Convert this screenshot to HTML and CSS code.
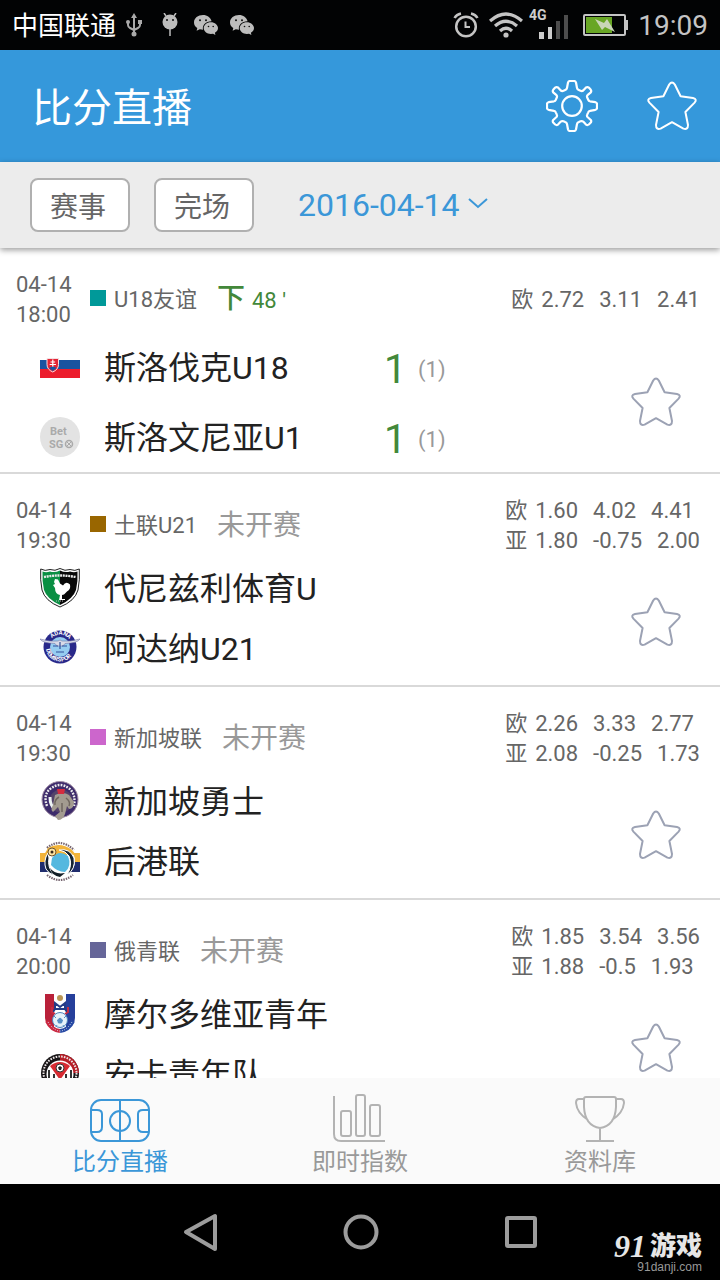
FILE: index.html
```html
<!DOCTYPE html>
<html lang="zh-CN">
<head>
<meta charset="utf-8">
<meta name="viewport" content="width=device-width, initial-scale=1">
<title>比分直播</title>
<link rel="stylesheet" href="styles.css">
</head>
<body>
<svg class="defs" aria-hidden="true">
  <symbol id="star" viewBox="0 0 52 52">
    <path d="M23.2 4.5Q26 0.5 28.8 4.5L34.6 16.2L47 18Q51.600 19.200 48.600 22.600L39.400 32L42 45Q42 50 37.400 48.600L26 42.200L14.600 48.600Q10 50 10 45L12.600 32L3.400 22.600Q0.400 19.200 5 18L17.400 16.200Z" fill="none" stroke="currentColor" stroke-width="2" stroke-linejoin="round"/>
  </symbol>
  <symbol id="wechat" viewBox="0 0 24 20">
    <path fill="#bdbdbd" d="M9 0C4 0 0 3.200 0 7.400C0 9.800 1.300 11.800 3.300 13L2.600 15.800L5.800 14.200L9 14.700C8 10 12 6.200 17.600 6.300C16.800 2.600 13.200 0 9 0Z"/>
    <path fill="#bdbdbd" d="M16.800 7.200C12.800 7.200 9.700 9.900 9.700 13.100C9.700 16.500 12.900 19 16.800 19L19 18.700L21.400 20L20.900 17.800C22.800 16.700 24 15 24 13.100C24 9.900 20.800 7.200 16.800 7.200Z"/>
    <g fill="#111"><circle cx="6" cy="5.200" r="1"/><circle cx="12" cy="5.200" r="1"/><circle cx="14.500" cy="11.500" r="0.800"/><circle cx="19.200" cy="11.500" r="0.800"/></g>
  </symbol>
</svg>

<div class="statusbar">
  <div class="status-left">
    <span class="carrier">中国联通</span>
    <svg width="16" height="24" viewBox="0 0 16 24" fill="none" stroke="#aaa" stroke-width="2"><path d="M8 3V21M2 9V12Q2 14 4 15L8 17M14 9V12Q14 14 12 15L8 17"/><path d="M5 5L8 0L11 5Z" fill="#aaa" stroke="none"/><circle cx="8" cy="21" r="2.500" fill="#aaa" stroke="none"/><circle cx="2" cy="9" r="2" fill="#aaa" stroke="none"/><path d="M12 7h4v4h-4z" fill="#aaa" stroke="none"/></svg>
    <svg class="droid" width="16" height="24" viewBox="0 0 16 24"><circle cx="8" cy="9" r="7.500" fill="#bdbdbd"/><path d="M4 3L2 0M12 3L14 0M8 16V23" stroke="#bdbdbd" stroke-width="1.500"/><circle cx="5" cy="7" r="1" fill="#111"/><circle cx="11" cy="7" r="1" fill="#111"/></svg>
    <svg width="24" height="20"><use href="#wechat"/></svg>
    <svg width="24" height="20"><use href="#wechat"/></svg>
  </div>
  <div class="status-right">
    <svg width="26" height="26" viewBox="0 0 26 26" fill="none" stroke="#c4c4c4" stroke-width="2.500"><circle cx="13" cy="14.500" r="9.800"/><path d="M1.500 6Q3.500 2.500 8 1.500M24.500 6Q22.500 2.500 18 1.500"/><path d="M12.500 9.500V15H17" stroke-width="2"/></svg>
    <svg width="34" height="26" viewBox="0 0 34 26" fill="none" stroke="#c4c4c4" stroke-width="3.200"><path d="M1 9Q17-5 33 9M6 14Q17 4.500 28 14M11 19Q17 13.500 23 19"/><circle cx="17" cy="23" r="2.600" fill="#c4c4c4" stroke="none"/></svg>
    <svg class="signal" width="40" height="34" viewBox="0 0 40 34"><text x="0" y="12" class="signal-label">4G</text><path d="M10 24h5v7h-5zM19 19h4v12h-4z" fill="#ccc"/><path d="M27 13h4v18h-4zM35 7h4v24h-4z" fill="#4d4d4d"/></svg>
    <svg width="45" height="22" viewBox="0 0 45 22"><rect x="1" y="1" width="41" height="20" rx="1" fill="none" stroke="#c4c4c4" stroke-width="2"/><path d="M42 6h3v10h-3z" fill="#c4c4c4"/><path d="M3 3h26v16H3z" fill="#68a625"/><path d="M12 5L21 9L24 5L32 18L22 13L19 16Z" fill="#c9d6b8"/></svg>
    <time class="clock">19:09</time>
  </div>
</div>

<header class="appbar">
  <h1>比分直播</h1>
  <div class="appbar-actions">
    <button type="button" aria-label="设置">
      <svg width="52" height="52" viewBox="0 0 52 52" fill="none" stroke="currentColor" stroke-width="2.200" stroke-linejoin="round"><circle cx="26" cy="26" r="9.800"/><path d="M22 2.500Q22.500 1 24 1H28Q29.500 1 30 2.500L31 8Q31.300 9.500 32.800 10.100L34.500 10.800Q36 11.400 37.200 10.500L40 7.500Q41.500 6.500 42.800 7.600L44.800 9.800Q45.700 11 44.800 12.400L41.500 15.200Q40.600 16.200 41.200 17.500L42.200 19.800Q42.700 21 44 21.300L49.400 22.200Q51 22.600 51 24V28Q51 29.400 49.400 29.800L44 30.800Q42.700 31 42.200 32.300L41.200 34.700Q40.600 36 41.500 37L44.800 40Q45.700 41.300 44.800 42.500L42.800 44.500Q41.500 45.500 40 44.600L37.200 41.600Q36 40.700 34.500 41.300L32.800 42Q31.300 42.500 31 44L30 49.500Q29.500 51 28 51H24Q22.500 51 22 49.500L21 44Q20.700 42.500 19.200 42L17.500 41.300Q16 40.700 14.800 41.600L12 44.600Q10.500 45.500 9.200 44.500L7.200 42.500Q6.300 41.300 7.200 40L10.500 37Q11.400 36 10.800 34.700L9.800 32.300Q9.300 31 8 30.800L2.600 29.800Q1 29.400 1 28V24Q1 22.600 2.600 22.200L8 21.300Q9.300 21 9.800 19.800L10.800 17.500Q11.400 16.200 10.500 15.200L7.200 12.400Q6.300 11 7.200 9.800L9.200 7.600Q10.500 6.500 12 7.500L14.800 10.500Q16 11.400 17.500 10.800L19.200 10.100Q20.700 9.500 21 8Z"/></svg>
    </button>
    <button type="button" aria-label="收藏"><svg width="52" height="52"><use href="#star"/></svg></button>
  </div>
</header>

<div class="filters">
  <button type="button" class="filter">赛事</button>
  <button type="button" class="filter">完场</button>
  <button type="button" class="date">2016-04-14<svg width="20" height="16" viewBox="0 0 20 16" fill="none" stroke="currentColor" stroke-width="2"><path d="M1 2L10 10L19 2"/></svg></button>
</div>

<main class="matches">
  <article class="match match-live">
    <div class="match-head">
      <time class="kickoff">04-14<br>18:00</time>
      <span class="league"><i class="swatch teal"></i>U18友谊</span>
      <span class="state live">下 <small>48 ′</small></span>
      <div class="odds">
        <div><b>欧</b><span>2.72</span><span>3.11</span><span>2.41</span></div>
      </div>
    </div>
    <div class="match-body">
      <div class="teams">
        <div class="team">
          <svg class="crest" viewBox="0 0 40 40"><path d="M0 13h40v9H0z" fill="#1853a0"/><path d="M0 22h40v9H0z" fill="#ec1c2c"/><path d="M7 11.500h11.500v6q0 5-5.750 7.500Q7 22.500 7 17.500Z" fill="#e42535" stroke="#f4dfe3"/><path d="M12.800 12.500v8M10.500 15h4.600M9.700 17.500h6.200" stroke="#fff" stroke-width="1.200"/><path d="M9 21q4-3 7.500 0l-3.700 3z" fill="#1853a0"/></svg>
          <span class="name">斯洛伐克U18</span><span class="score">1</span><span class="half">(1)</span>
        </div>
        <div class="team">
          <svg class="crest" viewBox="0 0 40 40"><circle cx="20" cy="20" r="20" fill="#e3e3e3"/><text class="placeholder" x="10" y="18">Bet</text><text class="placeholder" x="9" y="31">SG</text><circle cx="29" cy="27" r="3.500" fill="none" stroke="#aaa" stroke-width="1.500"/><path d="M27 25l4 4M31 25l-4 4" stroke="#aaa"/></svg>
          <span class="name">斯洛文尼亚U1</span><span class="score">1</span><span class="half">(1)</span>
        </div>
      </div>
      <button type="button" class="fav" aria-label="收藏比赛"><svg width="52" height="52"><use href="#star"/></svg></button>
    </div>
  </article>

  <article class="match">
    <div class="match-head">
      <time class="kickoff">04-14<br>19:30</time>
      <span class="league"><i class="swatch brown"></i>土联U21</span>
      <span class="state">未开赛</span>
      <div class="odds">
        <div><b>欧</b><span>1.60</span><span>4.02</span><span>4.41</span></div>
        <div><b>亚</b><span>1.80</span><span>-0.75</span><span>2.00</span></div>
      </div>
    </div>
    <div class="match-body">
      <div class="teams">
        <div class="team">
          <svg class="crest" viewBox="0 0 40 40"><path d="M.7 1Q5 3.500 10 1.500Q15 3.500 20 .5Q25 3.500 30 1.500Q35 3.500 39.300 1Q40 12 38 22Q35 33 20 39Q5 33 2 22Q0 12 .7 1Z" fill="#fff" stroke="#222"/><path d="M2.500 3.500Q6 5 10 3.500Q15 5 20 2.500V37Q7 31 4 22Q2 13 2.500 3.500Z" fill="#0a8f43"/><path d="M37.500 3.500Q34 5 30 3.500Q25 5 20 2.500V37Q33 31 36 22Q38 13 37.500 3.500Z" fill="#080808"/><path d="M4 9Q20 6 36 9" fill="none" stroke="#e8e8e8" stroke-width="2.400" stroke-dasharray="2 .7"/><path d="M15 11l3 .5l2 4l3 2q3-5 7-1q1 5-3 7l-3 3l-2 .5v4h3v1h-6l1-5q-5-1-5-7l-2-3l2-1l-1-2z" fill="#fff"/><path d="M16 33h8" stroke="#bbb" stroke-dasharray="1 1"/></svg>
          <span class="name">代尼兹利体育U</span>
        </div>
        <div class="team">
          <svg class="crest" viewBox="0 0 40 40"><circle cx="20" cy="19" r="16.500" fill="#29298a"/><circle cx="20" cy="19" r="10" fill="#96cdf1"/><path id="adana-top" d="M10 12Q20 1 30 12" fill="none"/><path id="adana-bottom" d="M6 21Q8 33 20 33.500Q32 33 34 21" fill="none"/><text class="crest-text"><textPath href="#adana-top" startOffset="10%">ADANA</textPath></text><text class="crest-text"><textPath href="#adana-bottom">DEMIRSPOR</textPath></text><path d="M0 11Q10 14 18 13L20 12L22 13Q30 14 40 11Q38 15 25 15.500L23 18H17L15 15.500Q2 15 0 11Z" fill="#d9dbe8" stroke="#777aa8" stroke-width=".6"/><path d="M13 18h5M22 18h5M20 14v7M16 24h8" stroke="#33509b" stroke-width="1.200"/></svg>
          <span class="name">阿达纳U21</span>
        </div>
      </div>
      <button type="button" class="fav" aria-label="收藏比赛"><svg width="52" height="52"><use href="#star"/></svg></button>
    </div>
  </article>

  <article class="match">
    <div class="match-head">
      <time class="kickoff">04-14<br>19:30</time>
      <span class="league"><i class="swatch pink"></i>新加坡联</span>
      <span class="state">未开赛</span>
      <div class="odds">
        <div><b>欧</b><span>2.26</span><span>3.33</span><span>2.77</span></div>
        <div><b>亚</b><span>2.08</span><span>-0.25</span><span>1.73</span></div>
      </div>
    </div>
    <div class="match-body">
      <div class="teams">
        <div class="team">
          <svg class="crest" viewBox="0 0 40 40"><circle cx="20" cy="18.500" r="18" fill="#3d2b6b" stroke="#a391a8"/><path d="M7 25Q3 14 10 8Q20 0 30 8Q36 14 34 25" fill="none" stroke="#eee" stroke-width="2.400" stroke-dasharray="1.800 1.200"/><circle cx="21" cy="20" r="11.500" fill="#54436a"/><path d="M10 16q0 9 5 12" fill="none" stroke="#eef3f4" stroke-width="3"/><path d="M15 14q8-4 14 0l5 7q0 7-5 7l-2-3l-2 8q-2 6-7 6l-3-4l5-4l-2-5l-5 5q-3-2 0-7z" fill="#a39b90"/><path d="M19 16q-5 3-4 8M26 17q5 4 3 8M22 22v9" fill="none" stroke="#70675f" stroke-width="1.500"/><path d="M17 8h8l-1 5h-6z" fill="#d42c3f"/></svg>
          <span class="name">新加坡勇士</span>
        </div>
        <div class="team">
          <svg class="crest" viewBox="0 0 40 40"><path d="M0 12h40v9H0z" fill="#f2b43a"/><path d="M0 21h40v10H0z" fill="#202d6d"/><circle cx="20" cy="20" r="15" fill="#fff"/><path d="M7 7Q20-4 34 9M7 34Q20 44 33 34" fill="none" stroke="#766570" stroke-width="2.200" stroke-dasharray="1.500 1"/><path d="M8 7Q20 0 32 9L36 14H4Z" fill="#f2b43a"/><path d="M8 12Q3 20 6 28Q9 33 14 34Q7 26 9 17ZM19 9Q30 7 34 17Q36 28 27 34Q33 24 29 15Q26 10 19 9Z" fill="#152332" stroke="#fff"/><path d="M12 17Q19 8 28 15Q32 25 25 31Q17 31 11 24Z" fill="#55b8df"/><path d="M10 27Q15 34 25 32L20 36Q12 35 10 27Z" fill="#111c25"/><circle cx="12" cy="11" r="4" fill="#ffe4a0" stroke="#6d5530"/><circle cx="12" cy="11" r="1.500" fill="#392b1c"/></svg>
          <span class="name">后港联</span>
        </div>
      </div>
      <button type="button" class="fav" aria-label="收藏比赛"><svg width="52" height="52"><use href="#star"/></svg></button>
    </div>
  </article>

  <article class="match">
    <div class="match-head">
      <time class="kickoff">04-14<br>20:00</time>
      <span class="league"><i class="swatch indigo"></i>俄青联</span>
      <span class="state">未开赛</span>
      <div class="odds">
        <div><b>欧</b><span>1.85</span><span>3.54</span><span>3.56</span></div>
        <div><b>亚</b><span>1.88</span><span>-0.5</span><span>1.93</span></div>
      </div>
    </div>
    <div class="match-body">
      <div class="teams">
        <div class="team">
          <svg class="crest" viewBox="0 0 40 40"><path d="M5 0h30v25q0 10-15 15Q5 35 5 25Z" fill="#fff"/><path d="M5 0h9v34Q5 30 5 24Z" fill="#b9213a"/><path d="M26 0h9v24q0 7-9 12Z" fill="#263f9b"/><circle cx="20" cy="4" r="3" fill="#b99556"/><path d="M15 15V9l5 4l5-4v6M13 18l2-3h10l2 3" fill="none" stroke="#253b86" stroke-width="2"/><path d="M12 13v5l3 2M28 13v5l-3 2" fill="none" stroke="#c42d43" stroke-width="2"/><circle cx="20" cy="26" r="7.500" fill="#e6f2fa" stroke="#4d83ba"/><path d="M20 24l2.500 2l-1 3h-3l-1-3zM14 22l2 2M26 22l-2 2M17 31l-1 2M23 31l1 2" fill="#578fc5" stroke="#578fc5"/><path d="M7 27q4 9 13 10" fill="none" stroke="#cb2740" stroke-width="4"/><path d="M33 27q-4 9-13 10" fill="none" stroke="#2749a4" stroke-width="4"/><path d="M8 28q12 18 24 0" fill="none" stroke="#dce6f2" stroke-dasharray="1 1.500"/></svg>
          <span class="name">摩尔多维亚青年</span>
        </div>
        <div class="team">
          <svg class="crest" viewBox="0 0 40 40"><circle cx="20" cy="19" r="19" fill="#171416"/><path d="M20 0A19 19 0 0 1 39 19H20Z" fill="#b61e27"/><circle cx="20" cy="19" r="16.500" fill="none" stroke="#ece6e6" stroke-width="2" stroke-dasharray="1.600 1.200"/><circle cx="20" cy="20" r="13.500" fill="#fff"/><path d="M10 12Q20 4 30 12L20 26Z" fill="#d72b32"/><path d="M9 16v11l5 4V20M31 16v11l-5 4V20M17 24v9M23 24v9" fill="none" stroke="#333" stroke-width="2"/><circle cx="20" cy="14" r="4" fill="#fff" stroke="#333"/><path d="M20 12l2 1.500l-1 2.500h-2l-1-2.500z" fill="#222"/></svg>
          <span class="name">安卡青年队</span>
        </div>
      </div>
      <button type="button" class="fav" aria-label="收藏比赛"><svg width="52" height="52"><use href="#star"/></svg></button>
    </div>
  </article>
</main>

<nav class="tabs">
  <a href="#live" class="tab active" aria-current="page">
    <svg width="60" height="48" viewBox="0 0 60 48" fill="none" stroke="currentColor" stroke-width="2"><rect x="1" y="6" width="58" height="41" rx="10"/><path d="M30 6V47M1 16H7Q12 16 12 20V33Q12 38 7 38H1M59 16H53Q48 16 48 20V33Q48 38 53 38H59"/><circle cx="30" cy="27" r="10"/></svg>
    比分直播
  </a>
  <a href="#index" class="tab">
    <svg width="56" height="48" viewBox="0 0 56 48" fill="none" stroke="#b3b3b3" stroke-width="2"><path d="M2 2V40Q2 47 9 47H53"/><rect x="9" y="17" width="10" height="25" rx="2"/><rect x="24" y="1" width="9" height="41" rx="2"/><rect x="38" y="11" width="10" height="31" rx="2"/></svg>
    即时指数
  </a>
  <a href="#database" class="tab">
    <svg width="50" height="48" viewBox="0 0 50 48" fill="none" stroke="#b3b3b3" stroke-width="2"><path d="M9 5Q9 3 11 3H39Q41 3 41 5V13Q40 32 25 34Q10 32 9 13ZM9 5H4Q1 5 1 9Q2 19 13 26M41 5H46Q49 5 49 9Q48 19 37 26M25 34V47M11 47H39"/></svg>
    资料库
  </a>
</nav>

<div class="sysnav">
  <button type="button" aria-label="返回"><svg width="40" height="40" viewBox="0 0 40 40"><path d="M6 20L35 4V37Z"/></svg></button>
  <button type="button" aria-label="主页"><svg width="40" height="40" viewBox="0 0 40 40"><circle cx="21" cy="20" r="15.500"/></svg></button>
  <button type="button" aria-label="最近任务"><svg width="40" height="40" viewBox="0 0 40 40"><rect x="7" y="6" width="28" height="28" rx="1"/></svg></button>
  <div class="watermark">
    <div class="brand"><span class="brand-num">91</span>游戏</div>
    <div class="site">91danji.com</div>
  </div>
</div>
</body>
</html>
```

FILE: styles.css
```css
* {
  box-sizing: border-box;
}

body {
  margin: 0;
  height: 100vh;
  display: flex;
  flex-direction: column;
  background: #fff;
  color: #666;
  font-family: Roboto, "Noto Sans CJK SC", sans-serif;
  font-size: 22px;
}

button {
  margin: 0;
  padding: 0;
  border: 0;
  background: none;
  color: inherit;
  font: inherit;
}

svg {
  display: block;
  flex: none;
}

.defs {
  position: absolute;
  width: 0;
  height: 0;
}

.statusbar {
  flex: none;
  height: 50px;
  padding: 0 12px;
  display: flex;
  align-items: center;
  justify-content: space-between;
  background: #020304;
}

.status-left {
  display: flex;
  align-items: center;
  gap: 12px;
}

.droid {
  margin: 0 4px 0 8px;
}

.carrier {
  margin-right: -2px;
  padding-bottom: 4px;
  color: #fff;
  font-size: 26px;
}

.status-right {
  display: flex;
  align-items: center;
  gap: 10px;
}

.signal {
  margin: 0 4px 0 -4px;
}

.signal-label {
  fill: #ccc;
  font-size: 14px;
  font-weight: 700;
}

.clock {
  color: #c4c4c4;
  font-size: 28px;
}

.appbar {
  flex: none;
  height: 112px;
  padding: 0 22px 0 32px;
  display: flex;
  align-items: center;
  justify-content: space-between;
  background: #3598db;
  color: #fff;
}

.appbar h1 {
  margin: 0;
  padding-bottom: 2px;
  font-size: 40px;
  font-weight: 400;
}

.appbar-actions {
  display: flex;
  gap: 48px;
}

.filters {
  flex: none;
  position: relative;
  height: 86px;
  padding: 0 30px;
  display: flex;
  align-items: center;
  gap: 24px;
  background: #ececec;
  box-shadow: 0 2px 6px rgba(0, 0, 0, 0.4);
}

.filter {
  width: 100px;
  height: 54px;
  padding-right: 4px;
  border: 2px solid #b0b0b0;
  border-radius: 8px;
  background: #fff;
  font-size: 28px;
}

.date {
  margin-left: 20px;
  display: flex;
  align-items: center;
  gap: 8px;
  color: #3b97d8;
  font-size: 32px;
}

.matches {
  flex: 1;
  min-height: 0;
  overflow: hidden;
}

.match {
  padding-top: 22px;
  border-bottom: 2px solid #d9d9d9;
}

.match-head {
  height: 60px;
  padding: 0 20px 0 16px;
  display: flex;
  align-items: center;
  line-height: 30px;
}

.kickoff {
  width: 74px;
}

.league {
  display: flex;
  align-items: center;
  gap: 8px;
}

.swatch {
  width: 16px;
  height: 16px;
  margin-bottom: 4px;
}

.teal { background: #009999; }
.brown { background: #996600; }
.pink { background: #cc66cc; }
.indigo { background: #666699; }

.state {
  margin-left: 20px;
  color: #999;
  font-size: 28px;
}

.state small {
  font-size: 22px;
  font-weight: 400;
}

.live {
  color: #43883a;
  font-weight: 500;
}

.odds {
  margin-left: auto;
}

.odds div {
  display: flex;
  gap: 15px;
}

.odds b {
  margin-right: -7px;
  font-weight: 400;
}

.match-body {
  padding: 2px 38px 0 40px;
  display: flex;
  align-items: center;
}

.teams {
  flex: 1;
  padding-bottom: 7px;
}

.team {
  height: 60px;
  display: flex;
  align-items: center;
  color: #222;
}

.match-live .teams {
  padding-bottom: 0;
}

.match-live .team {
  height: 70px;
}

.crest {
  width: 40px;
  height: 40px;
  margin-right: 24px;
}

.crest-text {
  fill: #fff;
  font-size: 6px;
  font-weight: 700;
}

.placeholder {
  fill: #aaa;
  font-size: 11px;
  font-weight: 700;
}

.name {
  padding-bottom: 4px;
  font-size: 32px;
}

.match-live .name {
  width: 280px;
}

.score {
  width: 34px;
  padding-top: 4px;
  color: #43883a;
  font-size: 40px;
}

.half {
  padding-top: 4px;
  color: #999;
}

.fav {
  color: #9ca2b4;
}

.tabs {
  flex: none;
  height: 106px;
  display: grid;
  grid-template-columns: repeat(3, 1fr);
  background: #fafafa;
}

.tab {
  padding-top: 16px;
  display: flex;
  flex-direction: column;
  align-items: center;
  gap: 4px;
  color: #999;
  font-size: 24px;
  line-height: 32px;
  text-decoration: none;
}

.active {
  color: #3b97d8;
}

.sysnav {
  flex: none;
  position: relative;
  height: 96px;
  padding: 0 120px;
  display: grid;
  grid-template-columns: repeat(3, 1fr);
  align-items: center;
  justify-items: center;
  background: #000;
}

.sysnav button svg {
  fill: none;
  stroke: #9c9c9c;
  stroke-width: 4;
  stroke-linejoin: round;
}

.watermark {
  position: absolute;
  right: 18px;
  bottom: 6px;
  color: #e6e6e6;
  text-align: right;
}

.brand {
  display: flex;
  align-items: center;
  gap: 4px;
  font-size: 26px;
  font-weight: 900;
  line-height: 28px;
}

.brand-num {
  font-family: "Liberation Serif", serif;
  font-size: 32px;
  font-style: italic;
}

.site {
  color: #999;
  font-family: "Liberation Sans", sans-serif;
  font-size: 12px;
  line-height: 14px;
}
```
